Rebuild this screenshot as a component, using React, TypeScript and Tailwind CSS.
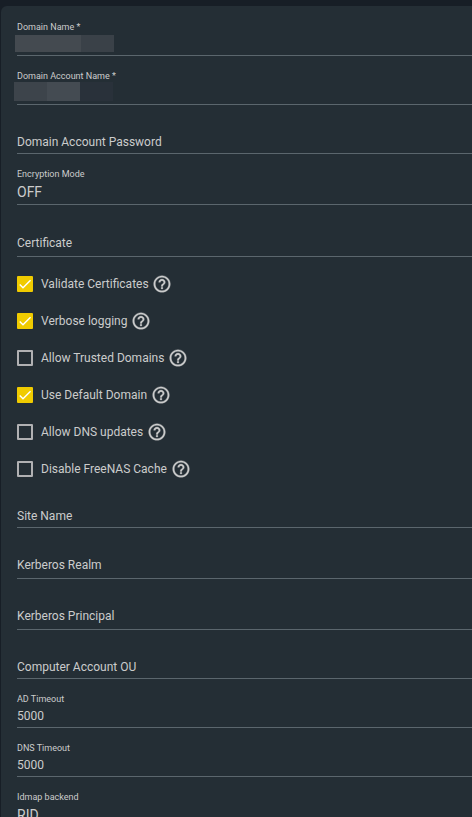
import clsx from 'clsx';
import { ReactNode } from 'react';

interface FieldProps {
    label: string;
    className: string;
    value?: string;
    select?: boolean;
    children?: ReactNode;
}

interface CheckProps {
    label: string;
    checked?: boolean;
}

const OPTIONS: CheckProps[] = [
    { label: 'Validate Certificates', checked: true },
    { label: 'Verbose logging', checked: true },
    { label: 'Allow Trusted Domains' },
    { label: 'Use Default Domain', checked: true },
    { label: 'Allow DNS updates' },
    { label: 'Disable FreeNAS Cache' },
];

function Field({ label, className, value, select, children }: FieldProps) {
    const filled = Boolean(value || children);

    return (
        <div className={clsx('flex shrink-0 flex-col justify-end border-b border-[#5b666d]', className)}>
            <div
                className={clsx(
                    filled ? 'text-[9px] leading-[12px]' : 'text-[12px] leading-[16px]',
                    !filled && (select ? 'pb-[5px]' : 'pb-[3px]'),
                )}
            >
                {label}
            </div>
            {value && (
                <div className={select ? 'pt-[2px] pb-[2px] text-[14px] leading-[20px]' : 'pt-[3px] pb-[3px] text-[12px] leading-[16px]'}>
                    {value}
                </div>
            )}
            {children}
        </div>
    );
}

function CheckRow({ label, checked }: CheckProps) {
    return (
        <div className="mb-px flex h-9 items-center">
            {checked ? (
                <span className="flex h-4 w-4 rounded-[1px] bg-[#f0cb00]">
                    <svg viewBox="0 0 24 24" className="h-4 w-4" fill="none" stroke="#fff" strokeWidth="2.1">
                        <path d="M4.1 12.7 9 17.6 20.3 6.3" />
                    </svg>
                </span>
            ) : (
                <span className="h-4 w-4 rounded-[1px] border-2 border-[#b1b1b3]" />
            )}
            <span className="ml-2 text-[12px] leading-[16px]">{label}</span>
            <svg viewBox="0 0 24 24" className="ml-[3.8px] h-5 w-5" fill="currentColor" stroke="currentColor" strokeWidth="0.35">
                <path d="M11 18h2v-2h-2v2zm1-16C6.48 2 2 6.48 2 12s4.48 10 10 10 10-4.48 10-10S17.52 2 12 2zm0 18c-4.41 0-8-3.59-8-8s3.59-8 8-8 8 3.59 8 8-3.59 8-8 8zm0-14c-2.21 0-4 1.79-4 4h2c0-1.1.9-2 2-2s2 .9 2 2c0 2-3 1.75-3 5h2c0-2.25 3-2.5 3-5 0-2.21-1.79-4-4-4z" />
            </svg>
        </div>
    );
}

export default function App() {
    return (
        <div className="h-screen overflow-hidden bg-[#171e26] pt-1.5 pl-px font-['Roboto',sans-serif] text-[#cbcccc]">
            <div className="flex h-full flex-col overflow-hidden rounded-tl-[6px] bg-[#242e35] pl-4">
                <Field label="Domain Name *" className="h-[50px]">
                    <div className="mt-[2px] mb-[3px] -ml-[2px] flex h-[17px]">
                        <span className="w-[66px] bg-[#444a50]" />
                        <span className="w-[33px] bg-[#3a4148]" />
                    </div>
                </Field>
                <Field label="Domain Account Name *" className="h-[49px]">
                    <div className="mb-[3px] -ml-[3px] flex h-[19px]">
                        <span className="w-[33px] bg-[#3d444b]" />
                        <span className="w-[33px] bg-[#444b52]" />
                        <span className="w-[33px] bg-[#29313a]" />
                    </div>
                </Field>
                <Field label="Domain Account Password" className="h-[49px]" />
                <Field label="Encryption Mode" value="OFF" select className="h-[51px]" />
                <Field label="Certificate" select className="h-[52px]" />

                <div className="shrink-0 pt-[9px]">
                    {OPTIONS.map((option) => (
                        <CheckRow key={option.label} {...option} />
                    ))}
                </div>

                <Field label="Site Name" className="h-[40px]" />
                <Field label="Kerberos Realm" select className="h-[51px]" />
                <Field label="Kerberos Principal" select className="h-[51px]" />
                <Field label="Computer Account OU" className="h-[49px]" />
                <Field label="AD Timeout" value="5000" className="h-[49px]" />
                <Field label="DNS Timeout" value="5000" className="h-[49px]" />
                <Field label="Idmap backend" value="RID" select className="h-[51px]" />
            </div>
        </div>
    );
}
